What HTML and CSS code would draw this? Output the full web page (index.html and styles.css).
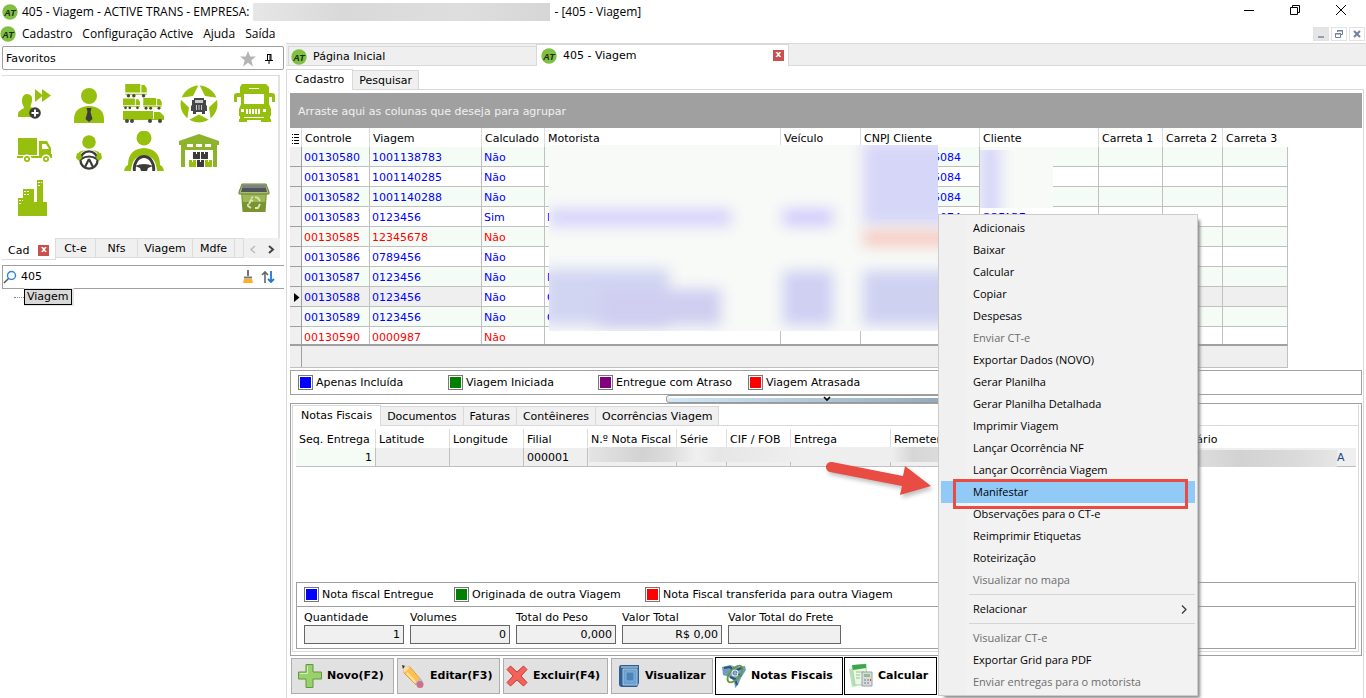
FILE: index.html
```html
<!DOCTYPE html>
<html lang="pt-BR">
<head>
<meta charset="utf-8">
<title>405 - Viagem</title>
<link rel="stylesheet" href="styles.css">
</head>
<body>
<svg class="defs" aria-hidden="true">
  <symbol id="logo" viewBox="0 0 16 16">
    <circle cx="8" cy="8" r="7.700" fill="#7fbf42"/>
    <text x="8" y="11.500" text-anchor="middle" class="logo-text">AT</text>
  </symbol>
  <symbol id="van" viewBox="0 0 20 13">
    <path d="M0 0h14v8H0zM15 1h3l2 3v4h-5zM0 9h20v1H0z" fill="#97bf0d"/>
    <g fill="#45464a"><circle cx="3" cy="11" r="1.600"/><circle cx="8" cy="11" r="1.600"/><circle cx="17" cy="11" r="1.600"/></g>
  </symbol>
</svg>

<header class="titlebar">
  <svg class="logo"><use href="#logo"/></svg>
  <span>405 - Viagem - ACTIVE TRANS - EMPRESA:</span>
  <span class="title-mask"></span>
  <span>- [405 - Viagem]</span>
  <div class="win-buttons">
    <button aria-label="Minimizar"><svg width="12" height="12" viewBox="0 0 12 12"><path d="M1 6.500h10" stroke="#000"/></svg></button>
    <button aria-label="Restaurar"><svg width="12" height="12" viewBox="0 0 12 12"><path d="M1.500 3.500h7v7h-7zM3.500 3V1.500h7v7H9" fill="none" stroke="#000"/></svg></button>
    <button aria-label="Fechar"><svg width="12" height="12" viewBox="0 0 12 12"><path d="M1 1l10 10M11 1L1 11" stroke="#000"/></svg></button>
  </div>
</header>

<nav class="menubar">
  <svg class="logo"><use href="#logo"/></svg>
  <button>Cadastro</button><button>Configuração Active</button><button>Ajuda</button><button>Saída</button>
  <div class="mdi-buttons">
    <button class="flat" aria-label="Minimizar janela"><svg width="10" height="10" viewBox="0 0 10 10"><path d="M2 8h6" stroke="#8fa0b3" stroke-width="2"/></svg></button>
    <button aria-label="Restaurar janela"><svg width="10" height="10" viewBox="0 0 10 10"><path d="M1.500 4.500h5v4h-5zM1 5h6M3.500 3V1.500h5v4H7M3 2h6" fill="none" stroke="#718396"/></svg></button>
    <button aria-label="Fechar janela"><svg width="10" height="10" viewBox="0 0 10 10"><path d="M2 2l6 6M8 2L2 8" stroke="#718396" stroke-width="2"/></svg></button>
  </div>
</nav>

<main class="workspace">
  <aside class="sidebar">
    <div class="fav-head">
      <span>Favoritos</span>
      <svg class="star" width="16" height="16" viewBox="0 0 16 16"><path d="M8 0l2.200 5.600H16l-4.700 3.700L13 15.500 8 11.800 3 15.500l1.700-6.200L0 5.600h5.800z" fill="#b4b4b4"/></svg>
      <svg width="8" height="10" viewBox="0 0 8 10"><path d="M2 .5h4M2.500 0v6M5 0v6M6 0v6M0 6.500h8M4 7v3" stroke="#000" fill="none"/></svg>
    </div>

    <div class="favorites">
      <button aria-label="Pessoas"><svg width="40" height="40" viewBox="0 0 40 40"><path d="M13 10c4 0 6 3 5 7-.5 3-1.500 4-1.500 6l5 2v8H4v-3c0-3 3-4 6-6 0-2-2-3-2-7 0-3 1-7 5-7z" fill="#97bf0d"/><path d="M21 5l8 6.500-8 6.500zM28 5l9 6.500-9 6.500z" fill="#97bf0d"/><circle cx="21" cy="29" r="5.800" fill="#3c3c3b"/><path d="M21 25.500v7M17.500 29h7" stroke="#fff" stroke-width="2"/></svg></button>
      <button aria-label="Cliente"><svg width="40" height="40" viewBox="0 0 40 40"><circle cx="20" cy="12" r="8" fill="#97bf0d"/><path d="M5 39v-4c0-8 6-13 15-13s15 5 15 13v4z" fill="#97bf0d"/><path d="M17.500 24h5l-1 4 2 7-3.500 3-3.500-3 2-7z" fill="#3c3c3b"/></svg></button>
      <button aria-label="Frota"><svg width="42" height="40" viewBox="0 0 42 40"><use href="#van" x="1" y="0" width="24" height="14" preserveAspectRatio="none"/><use href="#van" x="0" y="14" width="17" height="12"/><use href="#van" x="17" y="14" width="25" height="12"/><path d="M0 27h30v8H0zM31 28h6l4 4v4H0v-1h31z" fill="#97bf0d"/><g fill="#45464a"><circle cx="4" cy="37" r="2"/><circle cx="9" cy="37" r="2"/><circle cx="27" cy="37" r="2"/><circle cx="37" cy="37" r="2"/></g></svg></button>
      <button aria-label="Viagens"><svg width="40" height="40" viewBox="0 0 40 40"><circle cx="20" cy="20" r="18.500" fill="#97bf0d"/><path d="M20 0l6 12 14 2-10 9.500L32 37l-12-6.500L8 37l2-13.500L0 14l14-2z" fill="#fff"/><path d="M15 14h10v2h2v5l1 1v5h-2v3h-3v-2h-6v2h-3v-3h-2v-5l1-1v-5h2z" fill="#45464a"/><path d="M16 16h8v3h-8zM17 21h6v5h-6z" fill="#c9c9c9"/><path d="M18.500 21v5M20 21v5M21.500 21v5" stroke="#45464a"/></svg></button>
      <button aria-label="Ônibus"><svg width="42" height="42" viewBox="0 0 42 42"><path d="M9 1h24l3 3v6h3q3 0 3 3v6h-3v-5h-3v7l2 5v7h-1v3h1v3H6v-3h1v-3H6v-7l2-5v-7H4v5H1v-6q0-3 3-3h3V4z" fill="#97bf0d"/><path d="M11 11h20v10H11z" fill="#fff"/><path d="M13 26h2v5h-2zm3 0h2v5h-2zm3 0h2v5h-2zm3 0h2v5h-2zm3 0h2v5h-2zM8 26h3v3H8zm22 0h3v3h-3zM11 34h20v1H11zM16 5h10v1H16z" fill="#fff"/><path d="M14 37h14v5H14z" fill="#fff"/></svg></button>
      <button aria-label="Coleta"><svg width="40" height="40" viewBox="0 0 40 40"><path d="M4 7h19v17H4zM3 25h22v2H3zM25 10h8l4 7v6h1v4H25z" fill="#97bf0d"/><path d="M28 13h4l3 5h-7z" fill="#fff"/><g fill="#97bf0d" stroke="#fff" stroke-width="1.500"><circle cx="13" cy="28" r="3.800"/><circle cx="32" cy="28" r="3.800"/></g><g fill="#fff"><circle cx="13" cy="28" r="1.300"/><circle cx="32" cy="28" r="1.300"/></g></svg></button>
      <button aria-label="Motorista"><svg width="40" height="40" viewBox="0 0 40 40"><circle cx="20" cy="11" r="6.800" fill="#97bf0d"/><path d="M10 21q5-3 10-1 5-2 10 1l2 5-3 4H11l-3-4z" fill="#97bf0d"/><circle cx="20" cy="29" r="10.500" fill="#fff"/><circle cx="20" cy="29" r="8.600" fill="none" stroke="#3c3c3b" stroke-width="2.400"/><path d="M12 28q8-5 16 0M20 28l-4 8M20 28l4 8" fill="none" stroke="#3c3c3b" stroke-width="2.200"/><path d="M8 22l4 1 1 4-3 3-3-3zM32 22l-4 1-1 4 3 3 3-3z" fill="#97bf0d"/></svg></button>
      <button aria-label="Condutor"><svg width="40" height="40" viewBox="0 0 40 40"><circle cx="20" cy="7" r="7.500" fill="#97bf0d"/><path d="M0 40q1-5 4-6 0-16 16-17 16 1 16 17 3 1 4 6z" fill="#97bf0d"/><path d="M7 40q1-15 13-16 12 1 13 16z" fill="#fff"/><path d="M10.500 40a9.700 12 0 1 1 19 0" fill="none" stroke="#3c3c3b" stroke-width="3"/><path d="M11 35q9-4 18 0l-5 2-1 3h-6l-1-3z" fill="#3c3c3b"/></svg></button>
      <button aria-label="Armazém"><svg width="40" height="40" viewBox="0 0 40 40"><path d="M0 10L20 3l20 7v4h-2v22h-4V19H6v17H2V14H0z" fill="#8db32b"/><path d="M8 13h6v3H8zm9 0h6v3h-6zm9 0h6v3h-6z" fill="#fff"/><path d="M14 21h7v7h-7zm8 0h7v7h-7zM18 29h7v7h-7z" fill="#3c3c3b"/><path d="M10 29h7v7h-7zm16 0h7v7h-7z" fill="#97bf0d"/><path d="M17 21h1v2h-1zm8 0h1v2h-1zm-4 8h1v2h-1zm-8 0h1v2h-1zm16 0h1v2h-1z" fill="#fff"/></svg></button>
      <span></span>
      <button aria-label="Empresa"><svg width="40" height="40" viewBox="0 0 40 40"><path d="M4 20h5v-9h11v13h3V2h6v22h4v14H4z" fill="#97bf0d"/><path d="M5 22h2v1H5zm3 0h1v1H8zM5 25h2v1H5zm5-12h2v1h-2zm3 0h2v1h-2zm-3 3h2v1h-2zm3 0h2v1h-2zM24 4h2v1h-2zm3 0h1v1h-1zm-3 3h2v1h-2z" fill="#fff"/></svg></button>
      <span></span><span></span><span></span>
      <button aria-label="Lixeira"><svg width="34" height="34" viewBox="0 0 34 34"><path d="M4 11h26l-1.500 20h-23z" fill="#7b9431"/><path d="M5 12h24l-1 9H6z" fill="#9db755"/><path d="M5 3h24l3 8v2H2v-2z" fill="#a9bc6d" stroke="#6b7c3b"/><path d="M6 4h22l2 7H4z" fill="#50545b"/><path d="M6 4h22l1 3H5z" fill="#7d8288"/><path d="M12 23l2-4 2 1M18 16l3 1 2 3M23 23l-2 4h-3M14 27l-3-2v-2M14 17l2-1" fill="none" stroke="#dbe6b8" stroke-width="1.800"/></svg></button>
    </div>

    <div class="fav-tabs" role="tablist">
      <button class="active" role="tab">Cad<span class="close-x">x</span></button>
      <button role="tab" class="w-ct">Ct-e</button><button role="tab" class="w-nfs">Nfs</button><button role="tab" class="w-via">Viagem</button><button role="tab" class="w-mdf">Mdfe</button><span class="w-rest"></span>
      <button class="arrow" aria-label="Anterior"><svg width="8" height="9" viewBox="0 0 8 9"><path d="M6 1L2 4.500 6 8" fill="none" stroke="#bbb" stroke-width="1.500"/></svg></button>
      <button class="arrow" aria-label="Próximo"><svg width="8" height="9" viewBox="0 0 8 9"><path d="M2 1l4 3.500L2 8" fill="none" stroke="#444" stroke-width="2"/></svg></button>
    </div>

    <div class="search">
      <svg width="14" height="14" viewBox="0 0 14 14"><circle cx="8.500" cy="5.500" r="4" fill="none" stroke="#2b87d8" stroke-width="1.400"/><path d="M5.500 8.500L1 13" stroke="#555" stroke-width="1.500"/></svg>
      <input type="text" value="405" aria-label="Pesquisar no menu">
      <svg width="12" height="14" viewBox="0 0 12 14"><path d="M6 0v6M2 7.500h8" stroke="#777" stroke-width="2"/><path d="M2 9h8l1 4H1z" fill="#ffb01f"/></svg>
      <svg width="14" height="14" viewBox="0 0 14 14"><path d="M4 13V2M1 5l3-3 3 3" fill="none" stroke="#666" stroke-width="1.600"/><path d="M10 1v11M7 9l3 3 3-3" fill="none" stroke="#1d78d2" stroke-width="1.800"/></svg>
    </div>
    <div class="tree"><span class="twig"></span><button>Viagem</button></div>
  </aside>

  <section class="content">
    <div class="doc-tabs" role="tablist">
      <button role="tab" class="doc-tab"><svg class="logo"><use href="#logo"/></svg>Página Inicial</button>
      <button role="tab" class="doc-tab active"><svg class="logo"><use href="#logo"/></svg>405 - Viagem<span class="close-x">x</span></button>
    </div>
    <div class="tabs page-tabs" role="tablist">
      <button role="tab" class="active">Cadastro</button><button role="tab">Pesquisar</button>
    </div>

    <div class="page">
      <div class="group-bar">Arraste aqui as colunas que deseja para agrupar</div>

      <div class="grid">
        <table class="trips">
          <colgroup><col class="c-ind"><col class="c-ctl"><col class="c-via"><col class="c-cal"><col class="c-mot"><col class="c-vei"><col class="c-cnpj"><col class="c-cli"><col class="c-ca1"><col class="c-ca2"><col class="c-ca3"></colgroup>
          <thead><tr><th><svg width="8" height="11" viewBox="0 0 8 11"><path d="M2 1.500h5M2 4.500h5M2 7.500h5M2 10.500h5M0 1.500h1M0 4.500h1M0 7.500h1M0 10.500h1" stroke="#000"/></svg></th><th>Controle</th><th>Viagem</th><th>Calculado</th><th>Motorista</th><th>Veículo</th><th>CNPJ Cliente</th><th>Cliente</th><th>Carreta 1</th><th>Carreta 2</th><th>Carreta 3</th></tr></thead>
          <tbody>
            <tr><td></td><td>00130580</td><td>1001138783</td><td>Não</td><td></td><td></td><td class="tail">5084</td><td></td><td></td><td></td><td></td></tr>
            <tr><td></td><td>00130581</td><td>1001140285</td><td>Não</td><td></td><td></td><td class="tail">5084</td><td></td><td></td><td></td><td></td></tr>
            <tr><td></td><td>00130582</td><td>1001140288</td><td>Não</td><td></td><td></td><td class="tail">5084</td><td></td><td></td><td></td><td></td></tr>
            <tr><td></td><td>00130583</td><td>0123456</td><td>Sim</td><td>M</td><td></td><td class="tail">1074</td><td>COFARE</td><td></td><td></td><td></td></tr>
            <tr class="late"><td></td><td>00130585</td><td>12345678</td><td>Não</td><td></td><td></td><td></td><td></td><td></td><td></td><td></td></tr>
            <tr><td></td><td>00130586</td><td>0789456</td><td>Não</td><td></td><td></td><td></td><td></td><td></td><td></td><td></td></tr>
            <tr><td></td><td>00130587</td><td>0123456</td><td>Não</td><td>M</td><td></td><td></td><td></td><td></td><td></td><td></td></tr>
            <tr class="current"><td><svg width="6" height="9" viewBox="0 0 6 9"><path d="M0 0l5.500 4.500L0 9z"/></svg></td><td>00130588</td><td>0123456</td><td>Não</td><td>C</td><td></td><td></td><td></td><td></td><td></td><td></td></tr>
            <tr><td></td><td>00130589</td><td>0123456</td><td>Não</td><td>C</td><td></td><td></td><td></td><td></td><td></td><td></td></tr>
            <tr class="late"><td></td><td>00130590</td><td>0000987</td><td>Não</td><td></td><td></td><td></td><td></td><td></td><td></td><td></td></tr>
          </tbody>
        </table>
        <div class="mask mask-main"><i class="m1"></i><i class="m2"></i><i class="m3"></i><i class="m4"></i><i class="m5"></i><i class="m6"></i><i class="m7"></i><i class="m8"></i></div>
        <div class="mask mask-client"><i></i></div>
      </div>
      <div class="grid-foot"></div>

      <div class="legend trip-legend">
        <span><i class="blue"></i>Apenas Incluída</span><span><i class="green"></i>Viagem Iniciada</span><span><i class="purple"></i>Entregue com Atraso</span><span><i class="red"></i>Viagem Atrasada</span>
      </div>

      <div class="splitter"><button aria-label="Recolher"><svg width="8" height="6" viewBox="0 0 8 6"><path d="M1 1l3 3 3-3" fill="none" stroke="#000" stroke-width="1.600"/></svg></button></div>

      <section class="detail">
        <div class="detail-inner">
          <div class="tabs detail-tabs" role="tablist">
            <button role="tab" class="active">Notas Fiscais</button><button role="tab">Documentos</button><button role="tab">Faturas</button><button role="tab">Contêineres</button><button role="tab">Ocorrências Viagem</button>
          </div>
          <div class="notes-wrap">
            <table class="notes">
              <colgroup><col class="n-seq"><col class="n-lat"><col class="n-lat"><col class="n-fil"><col class="n-num"><col class="n-ser"><col class="n-fil"><col class="n-ent"><col class="n-rem"><col></colgroup>
              <thead><tr><th>Seq. Entrega</th><th>Latitude</th><th>Longitude</th><th>Filial</th><th>N.º Nota Fiscal</th><th>Série</th><th>CIF / FOB</th><th>Entrega</th><th>Remetente</th><th>Destinatário</th></tr></thead>
              <tbody><tr><td>1</td><td></td><td></td><td>000001</td><td>1</td><td></td><td></td><td></td><td></td><td class="dest">E<span>A</span></td></tr></tbody>
            </table>
            <div class="mask mask-note"></div>
            <div class="mask mask-dest"></div>
          </div>
          <div class="summary">
            <div class="legend note-legend">
              <span><i class="blue"></i>Nota fiscal Entregue</span><span class="second"><i class="green"></i>Originada de outra Viagem</span><span><i class="red"></i>Nota Fiscal transferida para outra Viagem</span>
            </div>
            <div class="totals">
              <label>Quantidade<input readonly value="1"></label>
              <label>Volumes<input readonly value="0"></label>
              <label>Total do Peso<input readonly value="0,000"></label>
              <label>Valor Total<input readonly value="R$ 0,00"></label>
              <label class="wide">Valor Total do Frete<input readonly value=""></label>
            </div>
          </div>
        </div>
      </section>

      <div class="actions">
        <button class="b-novo"><svg width="26" height="26" viewBox="0 0 26 26"><path d="M9 1.500h7V9h8.500v7H16v8.500H9V16H1.500V9H9z" fill="#9cd06a" stroke="#5a9a43"/><path d="M10.500 3v7.500H3" fill="none" stroke="#d3efb8"/></svg>Novo(F2)</button>
        <button class="b-editar"><svg width="26" height="26" viewBox="0 0 26 26"><path d="M3 3l7 1 11 13-5 5L4 10z" fill="#ffc04d" stroke="#e0a040"/><path d="M7 10l9 10" stroke="#ffe3a3" stroke-width="2"/><path d="M2 2l8 2-6 6z" fill="#f5deb6"/><path d="M2 2l3 1-2 3z" fill="#333"/><path d="M20 15l3 3-5 5-3-3z" fill="#b9bdc4"/><circle cx="20" cy="21.500" r="3.500" fill="#c9708a"/></svg>Editar(F3)</button>
        <button class="b-excluir"><svg width="24" height="24" viewBox="0 0 24 24"><path d="M5.500 2L12 8l6.500-6L22 5.500 16 12l6 6.500-3.500 3.500L12 16l-6.500 6L2 18.500 8 12 2 5.500z" fill="#f2635c" stroke="#d03a37" stroke-linejoin="round"/></svg>Excluir(F4)</button>
        <button class="b-vis"><svg width="24" height="24" viewBox="0 0 24 24"><path d="M4 1h18v18l-2 4H5q-3 0-3-3V4q0-3 2-3z" fill="#2f5f91"/><path d="M6 5h14v16H6z" fill="#6a9fd0" stroke="#a5c8e8"/><path d="M9 8h8v9H9z" fill="#4d83b8" stroke="#86b2dc"/><path d="M4 3h17" stroke="#dce9f5"/></svg>Visualizar</button>
        <button class="framed b-notas"><svg width="26" height="26" viewBox="0 0 26 26"><path d="M1 4l8-2 6 2 9-1 1 4-5 8-3 7-3 3-1-7-5-4-6-2z" fill="#6f9fbd"/><path d="M3 5l6-1 4 4 8-3M9 14l5 2 2 6M16 10l4 3" stroke="#2c5274" stroke-width="2" fill="none"/><ellipse cx="14" cy="11" rx="10" ry="5" transform="rotate(-50 14 11)" fill="none" stroke="#699743" stroke-width="1.800"/><circle cx="14" cy="10" r="3.500" fill="#e6f0f5"/><path d="M12 10h4q0-2-2-2t-2 2 2 2l2-.5" fill="none" stroke="#477199"/></svg>Notas Fiscais</button>
        <button class="framed b-calc"><svg width="26" height="26" viewBox="0 0 26 26"><path d="M1 6l6-1 2 18-5 1z" fill="#b8dfb9"/><path d="M4 3l14-2 1 21H7z" fill="#eaf6e6" stroke="#a9d4a5"/><path d="M4 2l14-1v4L5 7z" fill="#3aa648"/><path d="M8 9h8M8 12h4M8 15h4" stroke="#8cc988"/><path d="M14 9h10v14H14z" fill="#d8dcdd" stroke="#9aa0a3"/><path d="M16 11h6v3h-6z" fill="#8fbf8f"/><path d="M16 17h2M19 17h2M16 20h2M19 20h2" stroke="#727a80"/><path d="M22 17h1" stroke="#e33" stroke-width="2"/></svg>Calcular</button>
      </div>
    </div>
  </section>
</main>

<ul class="context-menu" role="menu">
  <li><button role="menuitem">Adicionais</button></li>
  <li><button role="menuitem">Baixar</button></li>
  <li><button role="menuitem">Calcular</button></li>
  <li><button role="menuitem">Copiar</button></li>
  <li><button role="menuitem">Despesas</button></li>
  <li><button role="menuitem" disabled>Enviar CT-e</button></li>
  <li><button role="menuitem">Exportar Dados (NOVO)</button></li>
  <li><button role="menuitem">Gerar Planilha</button></li>
  <li><button role="menuitem">Gerar Planilha Detalhada</button></li>
  <li><button role="menuitem">Imprimir Viagem</button></li>
  <li><button role="menuitem">Lançar Ocorrência NF</button></li>
  <li><button role="menuitem">Lançar Ocorrência Viagem</button></li>
  <li class="hot"><button role="menuitem">Manifestar</button><span class="callout"></span></li>
  <li><button role="menuitem">Observações para o CT-e</button></li>
  <li><button role="menuitem">Reimprimir Etiquetas</button></li>
  <li><button role="menuitem">Roteirização</button></li>
  <li><button role="menuitem" disabled>Visualizar no mapa</button></li>
  <li class="sep" role="separator"></li>
  <li><button role="menuitem">Relacionar<svg width="6" height="9" viewBox="0 0 6 9"><path d="M1 .5l4 4-4 4" fill="none" stroke="#333" stroke-width="1.200"/></svg></button></li>
  <li class="sep" role="separator"></li>
  <li><button role="menuitem" disabled>Visualizar CT-e</button></li>
  <li><button role="menuitem">Exportar Grid para PDF</button></li>
  <li><button role="menuitem" disabled>Enviar entregas para o motorista</button></li>
</ul>

<svg class="pointer" width="116" height="46" viewBox="0 0 116 46" aria-hidden="true"><path d="M12 6l71 14 2-10 26 20-31 9 2-9L10 16a5 5 0 0 1 2-10z" fill="#e84c42"/></svg>
</body>
</html>
```
FILE: styles.css
```css
* { box-sizing: border-box; }

body {
  margin: 0;
  height: 100vh;
  position: relative;
  overflow: hidden;
  display: flex;
  flex-direction: column;
  background: #fff;
  color: #000;
  font: 11px/14px Verdana, "DejaVu Sans", sans-serif;
}

button, input {
  font: inherit;
  color: inherit;
  background: none;
  border: 0;
  margin: 0;
  padding: 0;
  border-radius: 0;
}

button { white-space: nowrap; }
svg { flex: none; display: block; }
.defs { position: absolute; width: 0; height: 0; }
.logo { width: 16px; height: 16px; }
.logo-text { font: italic bold 9px "Liberation Sans", sans-serif; fill: #1d2b12; }

/* Window chrome */
.titlebar, .menubar { font: 12px/16px "Segoe UI", "Open Sans", sans-serif; }

.titlebar {
  flex: none;
  height: 24px;
  display: flex;
  align-items: center;
  gap: 4px;
  padding-left: 2px;
}
.title-mask { width: 297px; height: 18px; background: linear-gradient(90deg, #e6e6e6, #d9d9d9 30%, #dedede 70%, #d6d6d6); }
.win-buttons { margin-left: auto; margin-right: 19px; display: flex; gap: 34px; padding-bottom: 4px; }
.win-buttons button { width: 12px; }

.menubar {
  flex: none;
  height: 19px;
  display: flex;
  align-items: center;
  gap: 10px;
}
.menubar .logo { margin-right: -4px; }
.mdi-buttons { margin-left: auto; margin-right: 1px; display: flex; gap: 2px; }
.mdi-buttons button {
  width: 16px;
  height: 14px;
  display: grid;
  place-items: center;
  border: 1px solid #e2e2e2;
}
.mdi-buttons .flat { background: #e5e5e5; }

.workspace { flex: 1; min-height: 0; display: flex; }

/* Sidebar */
.sidebar { flex: none; width: 286px; padding: 3px 2px 0; display: flex; flex-direction: column; }
.fav-head {
  height: 24px;
  display: flex;
  align-items: center;
  border: 1px solid #a0a0a0;
  border-radius: 2px;
  padding: 1px 10px 0 3px;
}
.fav-head .star { margin-left: auto; margin-right: 9px; }

.favorites {
  margin: 5px 4px 0 0;
  height: 163px;
  padding: 4px 0 0 4px;
  border-top: 1px solid #dcdcdc;
  border-right: 2px solid #e2e2e2;
  display: grid;
  grid-template-columns: repeat(5, 55px);
  grid-auto-rows: 47px;
  align-content: start;
}
.favorites button { display: grid; place-items: center; }

.fav-tabs { display: flex; margin-right: 4px; height: 22px; align-items: flex-start; }
.fav-tabs > button, .w-rest {
  height: 20px;
  background: #f0f0f0;
  border: solid #dcdcdc;
  border-width: 1px 1px 1px 0;
}
.fav-tabs > button { padding-top: 2px; }
.fav-tabs > .active {
  width: 54px;
  height: 22px;
  background: #fff;
  border-width: 0 1px 1px 0;
  display: flex;
  align-items: center;
  gap: 9px;
  padding: 4px 0 0 6px;
}
.w-ct { width: 40px; }
.w-nfs { width: 42px; }
.w-via { width: 55px; }
.w-mdf { width: 42px; }
.w-rest { flex: 1; }
.fav-tabs > .arrow { width: 18px; border-width: 0; display: grid; place-items: center; }
.close-x {
  width: 11px;
  height: 11px;
  background: #c75050;
  color: #fff;
  font: bold 9px/9px "DejaVu Sans", sans-serif;
  text-align: center;
}

.search {
  margin: 5px 0 0;
  height: 24px;
  border: 1px solid #a0a0a0;
  border-right: 0;
  display: flex;
  align-items: center;
  padding-right: 9px;
  gap: 7px;
}
.search > :first-child { margin-right: -3px; }
.search input { flex: 1; min-width: 0; outline: 0; }

.tree { display: flex; align-items: center; padding-left: 12px; }
.twig { width: 10px; border-top: 1px dotted #888; }
.tree button { height: 16px; padding: 0 2px; border: 1px solid #000; background: #d9d9d9; box-shadow: 1px 0 0 1px #e3e3e3; line-height: 14px; }

/* Document area */
.content { flex: 1; min-width: 0; display: flex; flex-direction: column; }
.doc-tabs {
  height: 23px;
  flex: none;
  display: flex;
  align-items: flex-end;
  background: #efefef;
  border: solid #d9d9d9;
  border-width: 1px 0;
  padding-left: 2px;
}
.doc-tab {
  width: 248px;
  height: 19px;
  display: flex;
  align-items: center;
  gap: 6px;
  padding: 2px 4px 0 2px;
  border: 1px solid #d9d9d9;
  border-width: 1px 0 0 1px;
}
.doc-tab.active { width: 253px; height: 22px; margin-bottom: -1px; background: #fff; border-right-width: 1px; padding: 0 4px 0 4px; }
.doc-tab .close-x { margin-left: auto; }

.tabs { display: flex; align-items: flex-end; flex: none; border-bottom: 1px solid #d9d9d9; }
.tabs button {
  height: 19px;
  padding: 2px 6px 0;
  background: #f0f0f0;
  border: solid #d9d9d9;
  border-width: 1px 1px 0 0;
}
.tabs .active {
  height: 21px;
  background: #fff;
  margin-bottom: -1px;
  border-left-width: 1px;
  padding: 0 8px 1px;
}
.page-tabs { height: 24px; margin-right: 2px; }

.page {
  flex: 1;
  min-height: 0;
  display: flex;
  flex-direction: column;
  padding: 3px 1px 0 3px;
  margin-right: 2px;
  border: solid #d9d9d9;
  border-width: 0 1px;
}
.group-bar { flex: none; height: 35px; background: #a0a0a0; color: #f0f0f0; line-height: 38px; padding-left: 8px; }

table { border-collapse: separate; border-spacing: 0; table-layout: fixed; }
th, td { font-weight: normal; text-align: left; white-space: nowrap; overflow: hidden; padding: 2px 0 0 3px; }

/* Trip grid */
.grid { flex: none; position: relative; height: 216px; overflow: hidden; }
.trips { width: 998px; }
.c-ind { width: 12px; }
.c-ctl { width: 68px; }
.c-via { width: 112px; }
.c-cal { width: 63px; }
.c-mot { width: 236px; }
.c-vei { width: 80px; }
.c-cnpj, .c-cli { width: 119px; }
.c-ca1 { width: 64px; }
.c-ca2 { width: 60px; }
.c-ca3 { width: 65px; }
.trips th { height: 19px; border-right: 1px solid #dcdcdc; }
.trips th:last-child { border-right-color: transparent; }
.trips td { height: 20px; border: solid #c0c0c0; border-width: 0 1px 1px 0; color: #00f; padding-left: 2px; }
.trips tbody tr:nth-child(odd) { background: #f5fbf5; }
.trips .late td { color: #f00; }
.trips td:first-child { background: #f0f0f0; border-color: #a0a0a0; padding-left: 4px; }
.trips th:first-child { padding-left: 2px; }
.trips .current td:nth-child(2), .trips .current td:nth-child(3), .trips .current td:nth-child(n+8) { background: #efefef; }
.trips td.tail { padding-left: 72px; }
.grid-foot {
  flex: none;
  width: 998px;
  height: 24px;
  background: linear-gradient(90deg, transparent 11px, #a0a0a0 11px, #a0a0a0 12px, transparent 12px) #efefef;
  border: solid #c0c0c0;
  border-width: 2px 1px 1px 0;
  border-top-color: #a0a0a0;
}

/* Blurred private data */
.mask { position: absolute; overflow: hidden; background: #f7faf7; }
.mask i { position: absolute; background: #d6d6f8; filter: blur(7px); }
.mask-main { left: 259px; top: 17px; width: 389px; height: 186px; }
.mask-main .m1 { left: 0; top: 64px; width: 182px; height: 17px; background: #d5d2fb; }
.mask-main .m2 { left: 234px; top: 64px; width: 50px; height: 17px; background: #d0ccfb; }
.mask-main .m3 { left: 314px; top: -4px; width: 90px; height: 84px; }
.mask-main .m4 { left: 314px; top: 86px; width: 90px; height: 15px; background: #f6c8c0; }
.mask-main .m5 { left: -6px; top: 124px; width: 126px; height: 56px; background: #d2d5f2; }
.mask-main .m6 { left: 50px; top: 144px; width: 122px; height: 36px; background: #cfcef0; }
.mask-main .m7 { left: 234px; top: 126px; width: 50px; height: 54px; background: #cfd0f2; }
.mask-main .m8 { left: 314px; top: 126px; width: 90px; height: 54px; background: #cfd1f1; }
.mask-client { left: 690px; top: 22px; width: 73px; height: 58px; }
.mask-client i { left: 0; top: -8px; width: 20px; height: 80px; }
.mask-note { left: 296px; top: 21px; width: 360px; height: 15px; background: linear-gradient(90deg, #e4e4e4, #d2d2d2 15%, #dcdcdc 22%, #f0f0f0 30%, #e6e6e6 36%, #efefef 60%, #eee 84%, #d6d6d6 90%, #ddd); }
.mask-dest { left: 905px; top: 24px; width: 139px; height: 17px; background: linear-gradient(90deg, #ddd, #d2d2d2 30%, #dadada 70%, #e6e6e6); }

/* Legends */
.legend { display: flex; align-items: center; }
.legend span { display: flex; align-items: center; gap: 3px; }
.legend i { width: 15px; height: 15px; border: 1px solid #777; box-shadow: inset 0 0 0 1px #fff; }
.legend .blue { background: #00f; }
.legend .green { background: #008000; }
.legend .purple { background: #800080; }
.legend .red { background: #f00; }
.trip-legend { flex: none; height: 25px; margin-top: 2px; padding-left: 7px; border: 1px solid #a0a0a0; }
.trip-legend span { width: 150px; }

.splitter { flex: none; height: 8px; display: flex; justify-content: center; padding-left: 2px; }
.splitter button {
  width: 322px;
  height: 8px;
  display: grid;
  place-items: center;
  background: linear-gradient(90deg, #d2e8f7, #86a0b4);
  border: 1px solid #999;
  border-radius: 3px;
  box-shadow: inset 0 2px 0 #fff;
}

/* Detail panel */
.detail { flex: 1; min-height: 0; display: flex; border: 1px solid #a0a0a0; padding: 1px 2px 3px 1px; }
.detail-inner { flex: 1; min-width: 0; display: flex; flex-direction: column; border: 1px solid #d9d9d9; border-top: 0; }
.detail-tabs .active { border-left-width: 0; }
.notes-wrap { flex: 1; position: relative; padding: 3px 2px 0 3px; }
.notes { width: 100%; }
.n-seq { width: 80px; }
.n-lat { width: 74px; }
.n-fil { width: 64px; }
.n-num { width: 89px; }
.n-ser { width: 50px; }
.n-ent { width: 100px; }
.n-rem { width: 256px; }
.notes th { height: 19px; padding-top: 3px; border-right: 1px solid #dcdcdc; }
.notes td { height: 19px; background: #efefef; border: solid #c0c0c0; border-width: 0 1px 1px 0; padding-top: 1px; }
.notes th:last-child, .notes td:last-child { border-right: 0; }
.notes td:first-child { background: #f5fbf5; text-align: right; padding-right: 3px; }
.notes .dest { padding-left: 49px; }
.dest span { margin-left: 134px; color: #1a4a8a; }

.summary { flex: none; margin: 0 2px 2px 3px; border: 1px solid #a0a0a0; }
.note-legend { height: 23px; padding-left: 7px; }
.note-legend span { min-width: 150px; }
.note-legend .second { min-width: 191px; }
.totals { display: flex; gap: 6px; padding: 4px 7px; border-top: 1px solid #a0a0a0; }
.totals label { width: 100px; display: flex; flex-direction: column; }
.totals .wide { width: 113px; }
.totals input { width: 100%; height: 19px; border: 1px solid #666; background: #f0f0f0; text-align: right; padding-right: 3px; }

.actions { flex: none; height: 42px; display: flex; align-items: center; gap: 3px; padding: 0 0 2px 1px; }
.actions button {
  height: 36px;
  display: flex;
  align-items: center;
  gap: 4px;
  padding-left: 5px;
  background: #e1e1e1;
  border: 1px solid #adadad;
  font-weight: bold;
}
.actions .framed { height: 38px; background: #fff; border-color: #000; margin-left: -1px; }
.actions .b-novo, .actions .b-editar { width: 103px; }
.actions .b-editar { padding-left: 2px; }
.actions .b-excluir { width: 105px; padding-left: 1px; }
.actions .b-vis { width: 102px; }
.actions .b-notas { width: 128px; }
.actions .b-calc { width: 93px; padding-left: 3px; margin-left: -2px; }

/* Context menu */
.context-menu {
  position: absolute;
  left: 938px;
  top: 214px;
  width: 260px;
  margin: 0;
  padding: 2px;
  list-style: none;
  font: 11px/16px "Segoe UI", "Open Sans", sans-serif;
  background: linear-gradient(90deg, #f0f0f0 28px, #f2f2f2 28px);
  border: 1px solid #ccc;
  box-shadow: 4px 4px 3px -2px #888;
}
.context-menu li { position: relative; }
.context-menu button { width: 100%; height: 22px; padding: 0 8px 0 32px; display: flex; align-items: center; justify-content: space-between; }
.context-menu button:disabled { color: #6d6d6d; }
.context-menu .hot { background: #91c9f7; }
.context-menu .sep { height: 7px; margin-left: 28px; border-bottom: 3px solid transparent; box-shadow: inset 0 -1px 0 #d5d5d5; }
.callout { position: absolute; left: 12px; top: -2px; width: 235px; height: 30px; border: 3px solid #e84c42; z-index: 1; }

.pointer { position: absolute; left: 820px; top: 456px; filter: drop-shadow(2px 3px 2px #8888); }
```
